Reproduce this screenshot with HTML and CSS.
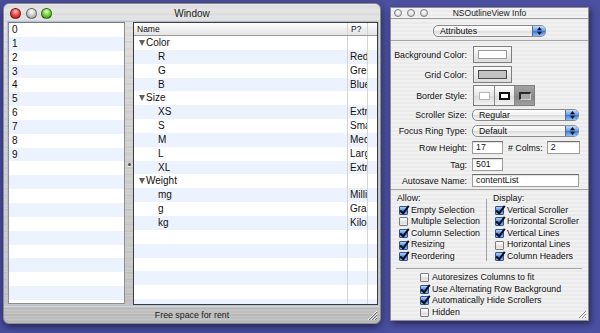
FILE: index.html
```html
<!DOCTYPE html>
<html lang="en">

<head>
    <meta charset="UTF-8">
    <title>Window</title>
    <link rel="stylesheet" href="styles.css">
</head>

<body>

    <div class="desk">

        <!-- Main window -->
        <div class="main-win">
            <div class="titlebar">
                <div class="lights">
                    <span class="light red"></span>
                    <span class="light yellow"></span>
                    <span class="light green"></span>
                </div>
                <div class="title">Window</div>
                <div></div>
            </div>

            <div class="split">
                <div class="table-left">
                    <div class="row">0</div>
                    <div class="row">1</div>
                    <div class="row">2</div>
                    <div class="row">3</div>
                    <div class="row">4</div>
                    <div class="row">5</div>
                    <div class="row">6</div>
                    <div class="row">7</div>
                    <div class="row">8</div>
                    <div class="row">9</div>
                    <div class="row"></div>
                    <div class="row"></div>
                    <div class="row"></div>
                    <div class="row"></div>
                    <div class="row"></div>
                    <div class="row"></div>
                    <div class="row"></div>
                    <div class="row"></div>
                    <div class="row"></div>
                    <div class="row"></div>
                    <div class="row"></div>
                </div>

                <div class="splitter"><span class="dimple"></span></div>

                <div class="outline">
                    <div class="o-head">
                        <div class="cell">Name</div>
                        <div class="cell">P?</div>
                        <div class="cell"></div>
                    </div>
                    <div class="o-body">
                        <div class="o-row"><div class="cell name"><span class="disclosure"></span>Color</div><div class="cell"></div><div class="cell"></div></div>
                        <div class="o-row"><div class="cell name child">R</div><div class="cell">Red</div><div class="cell"></div></div>
                        <div class="o-row"><div class="cell name child">G</div><div class="cell">Green</div><div class="cell"></div></div>
                        <div class="o-row"><div class="cell name child">B</div><div class="cell">Blue</div><div class="cell"></div></div>
                        <div class="o-row"><div class="cell name"><span class="disclosure"></span>Size</div><div class="cell"></div><div class="cell"></div></div>
                        <div class="o-row"><div class="cell name child">XS</div><div class="cell">Extra small</div><div class="cell"></div></div>
                        <div class="o-row"><div class="cell name child">S</div><div class="cell">Small</div><div class="cell"></div></div>
                        <div class="o-row"><div class="cell name child">M</div><div class="cell">Medium</div><div class="cell"></div></div>
                        <div class="o-row"><div class="cell name child">L</div><div class="cell">Large</div><div class="cell"></div></div>
                        <div class="o-row"><div class="cell name child">XL</div><div class="cell">Extra large</div><div class="cell"></div></div>
                        <div class="o-row"><div class="cell name"><span class="disclosure"></span>Weight</div><div class="cell"></div><div class="cell"></div></div>
                        <div class="o-row"><div class="cell name child">mg</div><div class="cell">Milligram</div><div class="cell"></div></div>
                        <div class="o-row"><div class="cell name child">g</div><div class="cell">Gram</div><div class="cell"></div></div>
                        <div class="o-row"><div class="cell name child">kg</div><div class="cell">Kilogram</div><div class="cell"></div></div>
                        <div class="o-row"><div class="cell name"></div><div class="cell"></div><div class="cell"></div></div>
                        <div class="o-row"><div class="cell name"></div><div class="cell"></div><div class="cell"></div></div>
                        <div class="o-row"><div class="cell name"></div><div class="cell"></div><div class="cell"></div></div>
                        <div class="o-row"><div class="cell name"></div><div class="cell"></div><div class="cell"></div></div>
                        <div class="o-row"><div class="cell name"></div><div class="cell"></div><div class="cell"></div></div>
                        <div class="o-row"><div class="cell name"></div><div class="cell"></div><div class="cell"></div></div>
                    </div>
                </div>
            </div>

            <div class="status">Free space for rent</div>

            <svg class="grip" width="11" height="11" viewBox="0 0 11 11">
                <path d="M10 1 L1 10 M10 4 L4 10 M10 7 L7 10" stroke="#f4f4f4" stroke-width="1"/>
                <path d="M10 2 L2 10 M10 5 L5 10 M10 8 L8 10" stroke="#6a6a6a" stroke-width="1"/>
            </svg>
        </div>

        <!-- Inspector window -->
        <div class="info-win">
            <div class="info-title">
                <div class="lights small">
                    <span class="light off"></span>
                    <span class="light off"></span>
                    <span class="light off"></span>
                </div>
                <div class="title small">NSOutlineView Info</div>
                <div></div>
            </div>

            <div class="pop-sec">
                <div class="popup pop-attr">
                    <span class="pop-val">Attributes</span>
                    <span class="pop-arrows">
                        <svg width="5" height="8" viewBox="0 0 5 8"><polygon points="0,3.2 2.5,0 5,3.2" fill="#111"/><polygon points="0,4.8 5,4.8 2.5,8" fill="#111"/></svg>
                    </span>
                </div>
            </div>

            <div class="form">
                <div class="f-row r-well">
                    <span class="lbl">Background Color:</span>
                    <span class="well"><span class="swatch swatch-white"></span></span>
                </div>
                <div class="f-row r-well">
                    <span class="lbl">Grid Color:</span>
                    <span class="well"><span class="swatch swatch-gray"></span></span>
                </div>
                <div class="f-row r-seg">
                    <span class="lbl">Border Style:</span>
                    <div class="seg">
                        <span class="seg-btn"><span class="ico ico-none"></span></span>
                        <span class="seg-btn"><span class="ico ico-line"></span></span>
                        <span class="seg-btn pressed"><span class="ico ico-bezel"></span></span>
                    </div>
                </div>
                <div class="f-row r-pop">
                    <span class="lbl">Scroller Size:</span>
                    <div class="popup pop-wide">
                        <span class="pop-val">Regular</span>
                        <span class="pop-arrows">
                            <svg width="5" height="8" viewBox="0 0 5 8"><polygon points="0,3.2 2.5,0 5,3.2" fill="#111"/><polygon points="0,4.8 5,4.8 2.5,8" fill="#111"/></svg>
                        </span>
                    </div>
                </div>
                <div class="f-row r-pop">
                    <span class="lbl">Focus Ring Type:</span>
                    <div class="popup pop-wide">
                        <span class="pop-val">Default</span>
                        <span class="pop-arrows">
                            <svg width="5" height="8" viewBox="0 0 5 8"><polygon points="0,3.2 2.5,0 5,3.2" fill="#111"/><polygon points="0,4.8 5,4.8 2.5,8" fill="#111"/></svg>
                        </span>
                    </div>
                </div>
                <div class="f-row r-field spaced">
                    <span class="lbl">Row Height:</span>
                    <span class="field f-short">17</span>
                    <span class="lbl-inline"># Colms:</span>
                    <span class="field f-colms">2</span>
                </div>
                <div class="f-row r-field spaced">
                    <span class="lbl">Tag:</span>
                    <span class="field f-short">501</span>
                </div>
                <div class="f-row r-field">
                    <span class="lbl">Autosave Name:</span>
                    <span class="field f-long">contentList</span>
                </div>
            </div>

            <div class="opts">
                <div class="opt-col">
                    <div class="opt-head">Allow:</div>
                    <div class="check"><span class="cb on"></span>Empty Selection</div>
                    <div class="check"><span class="cb"></span>Multiple Selection</div>
                    <div class="check"><span class="cb on"></span>Column Selection</div>
                    <div class="check"><span class="cb on"></span>Resizing</div>
                    <div class="check"><span class="cb on"></span>Reordering</div>
                </div>
                <div class="opt-divider"></div>
                <div class="opt-col">
                    <div class="opt-head">Display:</div>
                    <div class="check"><span class="cb on"></span>Vertical Scroller</div>
                    <div class="check"><span class="cb on"></span>Horizontal Scroller</div>
                    <div class="check"><span class="cb on"></span>Vertical Lines</div>
                    <div class="check"><span class="cb"></span>Horizontal Lines</div>
                    <div class="check"><span class="cb on"></span>Column Headers</div>
                </div>
            </div>

            <div class="sep"></div>

            <div class="more">
                <div class="check"><span class="cb"></span>Autoresizes Columns to fit</div>
                <div class="check"><span class="cb on"></span>Use Alternating Row Background</div>
                <div class="check"><span class="cb on"></span>Automatically Hide Scrollers</div>
                <div class="check"><span class="cb"></span>Hidden</div>
            </div>

            <svg class="grip grip-small" width="8" height="8" viewBox="0 0 8 8">
                <path d="M7 0 L0 7 M7 3 L3 7 M7 6 L6 7" stroke="#8a8a8a" stroke-width="1"/>
                <path d="M7 1 L1 7 M7 4 L4 7" stroke="#ffffff" stroke-width="1"/>
            </svg>
        </div>

    </div>

</body>

</html>
```

FILE: styles.css
```css
* {
    box-sizing: border-box;
}

body {
    margin: 0;
    font-family: "Liberation Sans", Arial, sans-serif;
    color: #111;
}

.desk {
    position: relative;
    width: 600px;
    height: 333px;
    overflow: hidden;
    background-color: #4b50a0;
}

/* ---------- main (brushed metal) window ---------- */

.main-win {
    position: absolute;
    left: 3px;
    top: 3px;
    width: 378px;
    height: 321px;
    display: flex;
    flex-direction: column;
    border-radius: 6px;
    border: 1px solid #8c8c8c;
    background:
        repeating-linear-gradient(0deg, rgba(255, 255, 255, 0.10) 0 1px, rgba(0, 0, 0, 0) 1px 3px),
        repeating-linear-gradient(0deg, rgba(0, 0, 0, 0.03) 0 2px, rgba(0, 0, 0, 0) 2px 7px),
        linear-gradient(#e4e4e4, #d2d2d2 30%, #c9c9c9 80%, #bdbdbd);
    box-shadow: 0 3px 9px rgba(0, 0, 30, 0.55);
}

.titlebar {
    height: 17px;
    flex: none;
    display: grid;
    grid-template-columns: 1fr auto 1fr;
    align-items: center;
    padding-top: 2px;
}

.lights {
    display: flex;
    gap: 4.5px;
    padding-left: 6px;
}

.light {
    width: 11px;
    height: 11px;
    border-radius: 50%;
    border: 1px solid rgba(0, 0, 0, 0.45);
}

.light.red {
    background: radial-gradient(circle at 50% 30%, #ffd0c8 0, #f2625a 35%, #c81e1e 80%);
}

.light.yellow {
    background: radial-gradient(circle at 50% 30%, #ffffff 0, #dcdcdc 35%, #a4a4a4 85%);
}

.light.green {
    background: radial-gradient(circle at 50% 30%, #e8ffd0 0, #8ee050 35%, #3a9a14 85%);
}

.title {
    font-size: 10px;
    white-space: nowrap;
    color: #1c1c1c;
}

.split {
    height: 285px;
    flex: none;
    margin: 0 1px 0 3px;
    border: 1px solid #b4c2d8;
    display: flex;
}

.table-left {
    width: 117px;
    flex: none;
    height: 282px;
    border: 1px solid #8e8e8e;
    border-top-color: #7a7a7a;
    background-color: #fff;
    overflow: hidden;
}

.row {
    height: 13.85px;
    line-height: 13.85px;
    padding-left: 3px;
    font-size: 10px;
}

.row:nth-child(even),
.o-row:nth-child(even) {
    background-color: #edf3fe;
}

.splitter {
    width: 8px;
    flex: none;
    display: flex;
    align-items: center;
    justify-content: center;
}

.dimple {
    width: 3px;
    height: 3px;
    margin-top: 2px;
    border-radius: 50%;
    background-color: #505050;
    box-shadow: 0 1px 0 #f0f0f0;
}

.outline {
    flex: 1;
    border: 1px solid #3c3c3c;
    background-color: #fff;
    overflow: hidden;
}

.o-head,
.o-row {
    display: grid;
    grid-template-columns: 213px 20px 10px;
}

.o-head {
    height: 13px;
    line-height: 12px;
    font-size: 8.5px;
    background: linear-gradient(#ffffff, #f0f0f0 50%, #e4e4e4);
    border-bottom: 1px solid #9a9a9a;
}

.o-head .cell {
    padding-left: 3px;
}

.o-row {
    height: 13.85px;
    line-height: 13.85px;
    font-size: 10px;
}

.cell {
    overflow: hidden;
    white-space: nowrap;
    padding-left: 2px;
}

.cell + .cell {
    border-left: 1px solid #d4d4d4;
}

.o-row .cell.name {
    padding-left: 5px;
    display: flex;
    align-items: center;
}

.o-row .cell.name.child {
    padding-left: 24px;
}

.disclosure {
    width: 0;
    height: 0;
    margin-right: 1px;
    border-left: 3.5px solid transparent;
    border-right: 3.5px solid transparent;
    border-top: 6px solid #606060;
}

.status {
    flex: 1;
    display: flex;
    align-items: center;
    justify-content: center;
    font-size: 8.8px;
    color: #1a1a1a;
    border-top: 1px solid rgba(255, 255, 255, 0.35);
}

.grip {
    position: absolute;
    right: 2px;
    bottom: 2px;
}

/* ---------- inspector window ---------- */

.info-win {
    position: absolute;
    left: 390px;
    top: 7px;
    width: 199px;
    height: 314px;
    border: 1px solid #8e8e8e;
    background: repeating-linear-gradient(#f1f1f1 0 2px, #ebebeb 2px 4px);
    box-shadow: 2px 3px 6px rgba(0, 0, 30, 0.5);
    font-size: 8.8px;
    white-space: nowrap;
}

.info-title {
    height: 11px;
    display: grid;
    grid-template-columns: 1fr auto 1fr;
    align-items: center;
    border-bottom: 1px solid #9c9c9c;
}

.lights.small {
    gap: 5px;
    padding-left: 3px;
}

.light.off {
    width: 8px;
    height: 8px;
    border: 1px solid #7c7c7c;
    background: radial-gradient(circle at 50% 35%, #ffffff 0, #e6e6e6 50%, #bcbcbc);
}

.title.small {
    font-size: 8.5px;
}

.pop-sec {
    padding: 6px 0 3px;
    display: flex;
    justify-content: center;
    border-bottom: 1px solid #a4a4a4;
}

.popup {
    height: 12px;
    display: flex;
    align-items: stretch;
    border: 1px solid #8a8a8a;
    border-radius: 5px;
    overflow: hidden;
    background: linear-gradient(#ffffff, #f2f2f2 45%, #dedede 55%, #f6f6f6);
}

.pop-attr {
    width: 113px;
}

.pop-wide {
    width: 107px;
}

.pop-val {
    flex: 1;
    padding-left: 6px;
    line-height: 10px;
}

.pop-arrows {
    width: 13px;
    display: flex;
    align-items: center;
    justify-content: center;
    border-left: 1px solid #4a6ea8;
    background: linear-gradient(#c8defa, #6aa0ec 45%, #3e7ad6 55%, #8cc0f6);
}

.form {
    padding: 5px 0 2px;
    display: flex;
    flex-direction: column;
    gap: 3px;
    border-bottom: 1px solid #a4a4a4;
}

.f-row {
    display: flex;
    align-items: center;
}

.f-row.spaced {
    margin-top: 1px;
}

.r-well {
    height: 17px;
}

.r-seg {
    height: 19px;
}

.r-pop,
.r-field {
    height: 13px;
}

.lbl {
    width: 76px;
    margin-right: 5px;
    text-align: right;
    flex: none;
}

.well {
    width: 39px;
    height: 17px;
    margin-left: 1px;
    padding: 3px 4px;
    border: 1px solid #7e7e7e;
    background: linear-gradient(#fafafa, #dcdcdc);
}

.swatch {
    display: block;
    height: 100%;
}

.swatch-white {
    background-color: #fff;
    border: 1px solid #9a9a9a;
}

.swatch-gray {
    background-color: #c2c2c2;
    border: 1px solid #4a4a4a;
}

.seg {
    display: flex;
    margin-left: 1px;
    border: 1px solid #7e7e7e;
}

.seg-btn {
    width: 20px;
    height: 19px;
    display: flex;
    align-items: center;
    justify-content: center;
    background: linear-gradient(#fdfdfd, #e6e6e6 50%, #d8d8d8 51%, #f2f2f2);
}

.seg-btn + .seg-btn {
    border-left: 1px solid #8a8a8a;
}

.seg-btn.pressed {
    background: linear-gradient(#a4a4a4, #8e8e8e 50%, #828282 51%, #a0a0a0);
}

.ico {
    display: block;
    width: 11px;
    height: 8px;
    background-color: #fff;
}

.ico-none {
    border: 1px solid #b8b8b8;
}

.ico-line {
    border: 2px solid #111;
}

.ico-bezel {
    width: 12px;
    background-color: #a8a8a8;
    border: 1px solid #d0d0d0;
    border-top: 2px solid #2a2a2a;
    border-left: 2px solid #2a2a2a;
}

.field {
    height: 13px;
    line-height: 11px;
    padding-left: 3px;
    background-color: #fff;
    border: 1px solid #9c9c9c;
    border-top-color: #6c6c6c;
    box-shadow: inset 0 1px 1px rgba(0, 0, 0, 0.12);
}

.f-short {
    width: 31px;
}

.f-colms {
    width: 33px;
}

.f-long {
    width: 107px;
}

.lbl-inline {
    margin: 0 4px 0 5px;
}

.opts {
    display: grid;
    grid-template-columns: 95px 1px 1fr;
    padding: 3px 0 5px;
}

.opt-col {
    padding-left: 6px;
    line-height: 11.6px;
}

.opt-divider {
    margin: 6px 0 2px;
    background-color: #a0a0a0;
}

.check {
    display: flex;
    align-items: center;
    padding-left: 2px;
}

.cb {
    position: relative;
    width: 9px;
    height: 9px;
    margin-right: 3px;
    flex: none;
    border: 1px solid #7a7a7a;
    border-radius: 1px;
    background: linear-gradient(#ffffff, #e8e8e8 50%, #d4d4d4 51%, #f0f0f0);
}

.cb.on {
    border-color: #34548e;
    background: linear-gradient(#b4d0f6, #5e96e6 45%, #3a74d2 55%, #86bcf4);
}

.cb.on::after {
    content: "";
    position: absolute;
    left: 2px;
    top: -3px;
    width: 3px;
    height: 8px;
    border: solid #0e0e1e;
    border-width: 0 2px 2px 0;
    transform: rotate(38deg);
}

.sep {
    height: 1px;
    margin: 0 6px 0 5px;
    background-color: #a4a4a4;
}

.more {
    padding: 3.5px 0 0 27px;
    line-height: 11.5px;
}

.grip-small {
    right: 1px;
    bottom: 1px;
}
```
